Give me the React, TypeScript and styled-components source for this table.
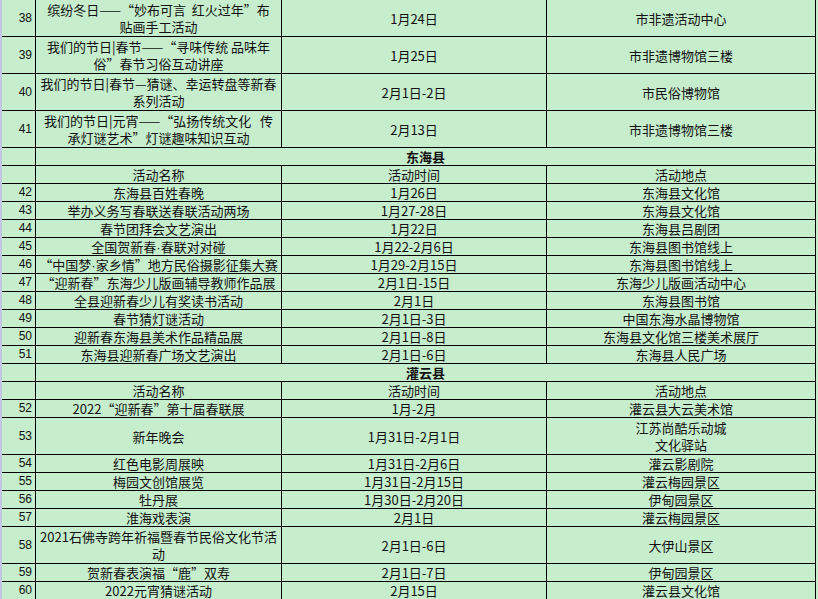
import React from 'react'
import styled, { createGlobalStyle } from 'styled-components'

const GlobalStyle = createGlobalStyle`
  html, body {
    margin: 0;
    padding: 0;
    background: #c6edcc;
  }
  *, *::before, *::after {
    box-sizing: border-box;
  }
`

const Page = styled.div`
  display: flex;
  width: 818px;
  height: 599px;
  overflow: hidden;
  background: #c6edcc;
  font-family: "Noto Sans CJK SC", "Microsoft YaHei", sans-serif;
  font-size: 13px;
  color: #111;
`

const LeftEdge = styled.div`
  flex: 0 0 2px;
  background: #c5c5e6;
`

const Sheet = styled.table`
  flex: none;
  align-self: flex-start;
  width: 814px;
  table-layout: fixed;
  border-collapse: separate;
  border-spacing: 0;
`

const Col = styled.col<{ $w: number }>`
  width: ${(p) => p.$w}px;
`

const Cell = styled.td<{ $tall?: boolean }>`
  height: ${(p) => (p.$tall ? 37 : 18)}px;
  padding: 0 2px;
  border-right: 1px solid #000;
  border-bottom: 1px solid #000;
  text-align: center;
  vertical-align: middle;
  line-height: 17px;
  white-space: pre-wrap;
  overflow: hidden;
`

const NumCell = styled(Cell)`
  text-align: right;
  padding: 0 3px 0 0;
  font-family: "Liberation Sans", Arial, sans-serif;
  font-size: 12px;
`

const TitleCell = styled(Cell)`
  font-weight: 700;
`

// the middle dot is narrow in the sheet, not full width as in the CJK font
const Dot = styled.span`
  font-family: "Liberation Sans", Arial, sans-serif;
  line-height: 0;
`

const withDots = (text: string) =>
  text.split('·').map((part, i) => (
    <React.Fragment key={i}>
      {i > 0 && <Dot>·</Dot>}
      {part}
    </React.Fragment>
  ))

type Row = {
  no: number
  name: string
  time: string
  place: string
  tall?: boolean
}

type Section = {
  title?: string
  rows: Row[]
}

const sections: Section[] = [
  {
    rows: [
      { no: 38, name: '缤纷冬日——“妙布可言  红火过年”布\n贴画手工活动', time: '1月24日', place: '市非遗活动中心', tall: true },
      { no: 39, name: '我们的节日|春节——“寻味传统 品味年\n俗”春节习俗互动讲座', time: '1月25日', place: '市非遗博物馆三楼', tall: true },
      { no: 40, name: '我们的节日|春节—猜谜、幸运转盘等新春\n系列活动', time: '2月1日-2日', place: '市民俗博物馆', tall: true },
      { no: 41, name: '我们的节日|元宵——“弘扬传统文化   传\n承灯谜艺术”灯谜趣味知识互动', time: '2月13日', place: '市非遗博物馆三楼', tall: true },
    ],
  },
  {
    title: '东海县',
    rows: [
      { no: 42, name: '东海县百姓春晚', time: '1月26日', place: '东海县文化馆' },
      { no: 43, name: '举办义务写春联送春联活动两场', time: '1月27-28日', place: '东海县文化馆' },
      { no: 44, name: '春节团拜会文艺演出', time: '1月22日', place: '东海县吕剧团' },
      { no: 45, name: '全国贺新春·春联对对碰', time: '1月22-2月6日', place: '东海县图书馆线上' },
      { no: 46, name: '“中国梦·家乡情”地方民俗摄影征集大赛', time: '1月29-2月15日', place: '东海县图书馆线上' },
      { no: 47, name: '“迎新春”东海少儿版画辅导教师作品展', time: '2月1日-15日', place: '东海少儿版画活动中心' },
      { no: 48, name: '全县迎新春少儿有奖读书活动', time: '2月1日', place: '东海县图书馆' },
      { no: 49, name: '春节猜灯谜活动', time: '2月1日-3日', place: '中国东海水晶博物馆' },
      { no: 50, name: '迎新春东海县美术作品精品展', time: '2月1日-8日', place: '东海县文化馆三楼美术展厅' },
      { no: 51, name: '东海县迎新春广场文艺演出', time: '2月1日-6日', place: '东海县人民广场' },
    ],
  },
  {
    title: '灌云县',
    rows: [
      { no: 52, name: '2022“迎新春”第十届春联展', time: '1月-2月', place: '灌云县大云美术馆' },
      { no: 53, name: '新年晚会', time: '1月31日-2月1日', place: '江苏尚酷乐动城\n文化驿站', tall: true },
      { no: 54, name: '红色电影周展映', time: '1月31日-2月6日', place: '灌云影剧院' },
      { no: 55, name: '梅园文创馆展览', time: '1月31日-2月15日', place: '灌云梅园景区' },
      { no: 56, name: '牡丹展', time: '1月30日-2月20日', place: '伊甸园景区' },
      { no: 57, name: '淮海戏表演', time: '2月1日', place: '灌云梅园景区' },
      { no: 58, name: '2021石佛寺跨年祈福暨春节民俗文化节活\n动', time: '2月1日-6日', place: '大伊山景区', tall: true },
      { no: 59, name: '贺新春表演福“鹿”双寿', time: '2月1日-7日', place: '伊甸园景区' },
      { no: 60, name: '2022元宵猜谜活动', time: '2月15日', place: '灌云县文化馆' },
    ],
  },
]

const SectionRows = ({ section }: { section: Section }) => (
  <>
    {section.title && (
      <>
        <tr>
          <NumCell />
          <TitleCell colSpan={3}>{section.title}</TitleCell>
        </tr>
        <tr>
          <NumCell />
          <Cell>活动名称</Cell>
          <Cell>活动时间</Cell>
          <Cell>活动地点</Cell>
        </tr>
      </>
    )}
    {section.rows.map((r) => (
      <tr key={r.no}>
        <NumCell $tall={r.tall}>{r.no}</NumCell>
        <Cell $tall={r.tall}>{withDots(r.name)}</Cell>
        <Cell $tall={r.tall}>{r.time}</Cell>
        <Cell $tall={r.tall}>{r.place}</Cell>
      </tr>
    ))}
  </>
)

export default function App() {
  return (
    <>
      <GlobalStyle />
      <Page>
        <LeftEdge />
        <Sheet>
          <colgroup>
            <Col $w={34} />
            <Col $w={246} />
            <Col $w={265} />
            <Col $w={269} />
          </colgroup>
          <tbody>
            {sections.map((s, i) => (
              <SectionRows key={i} section={s} />
            ))}
          </tbody>
        </Sheet>
      </Page>
    </>
  )
}
